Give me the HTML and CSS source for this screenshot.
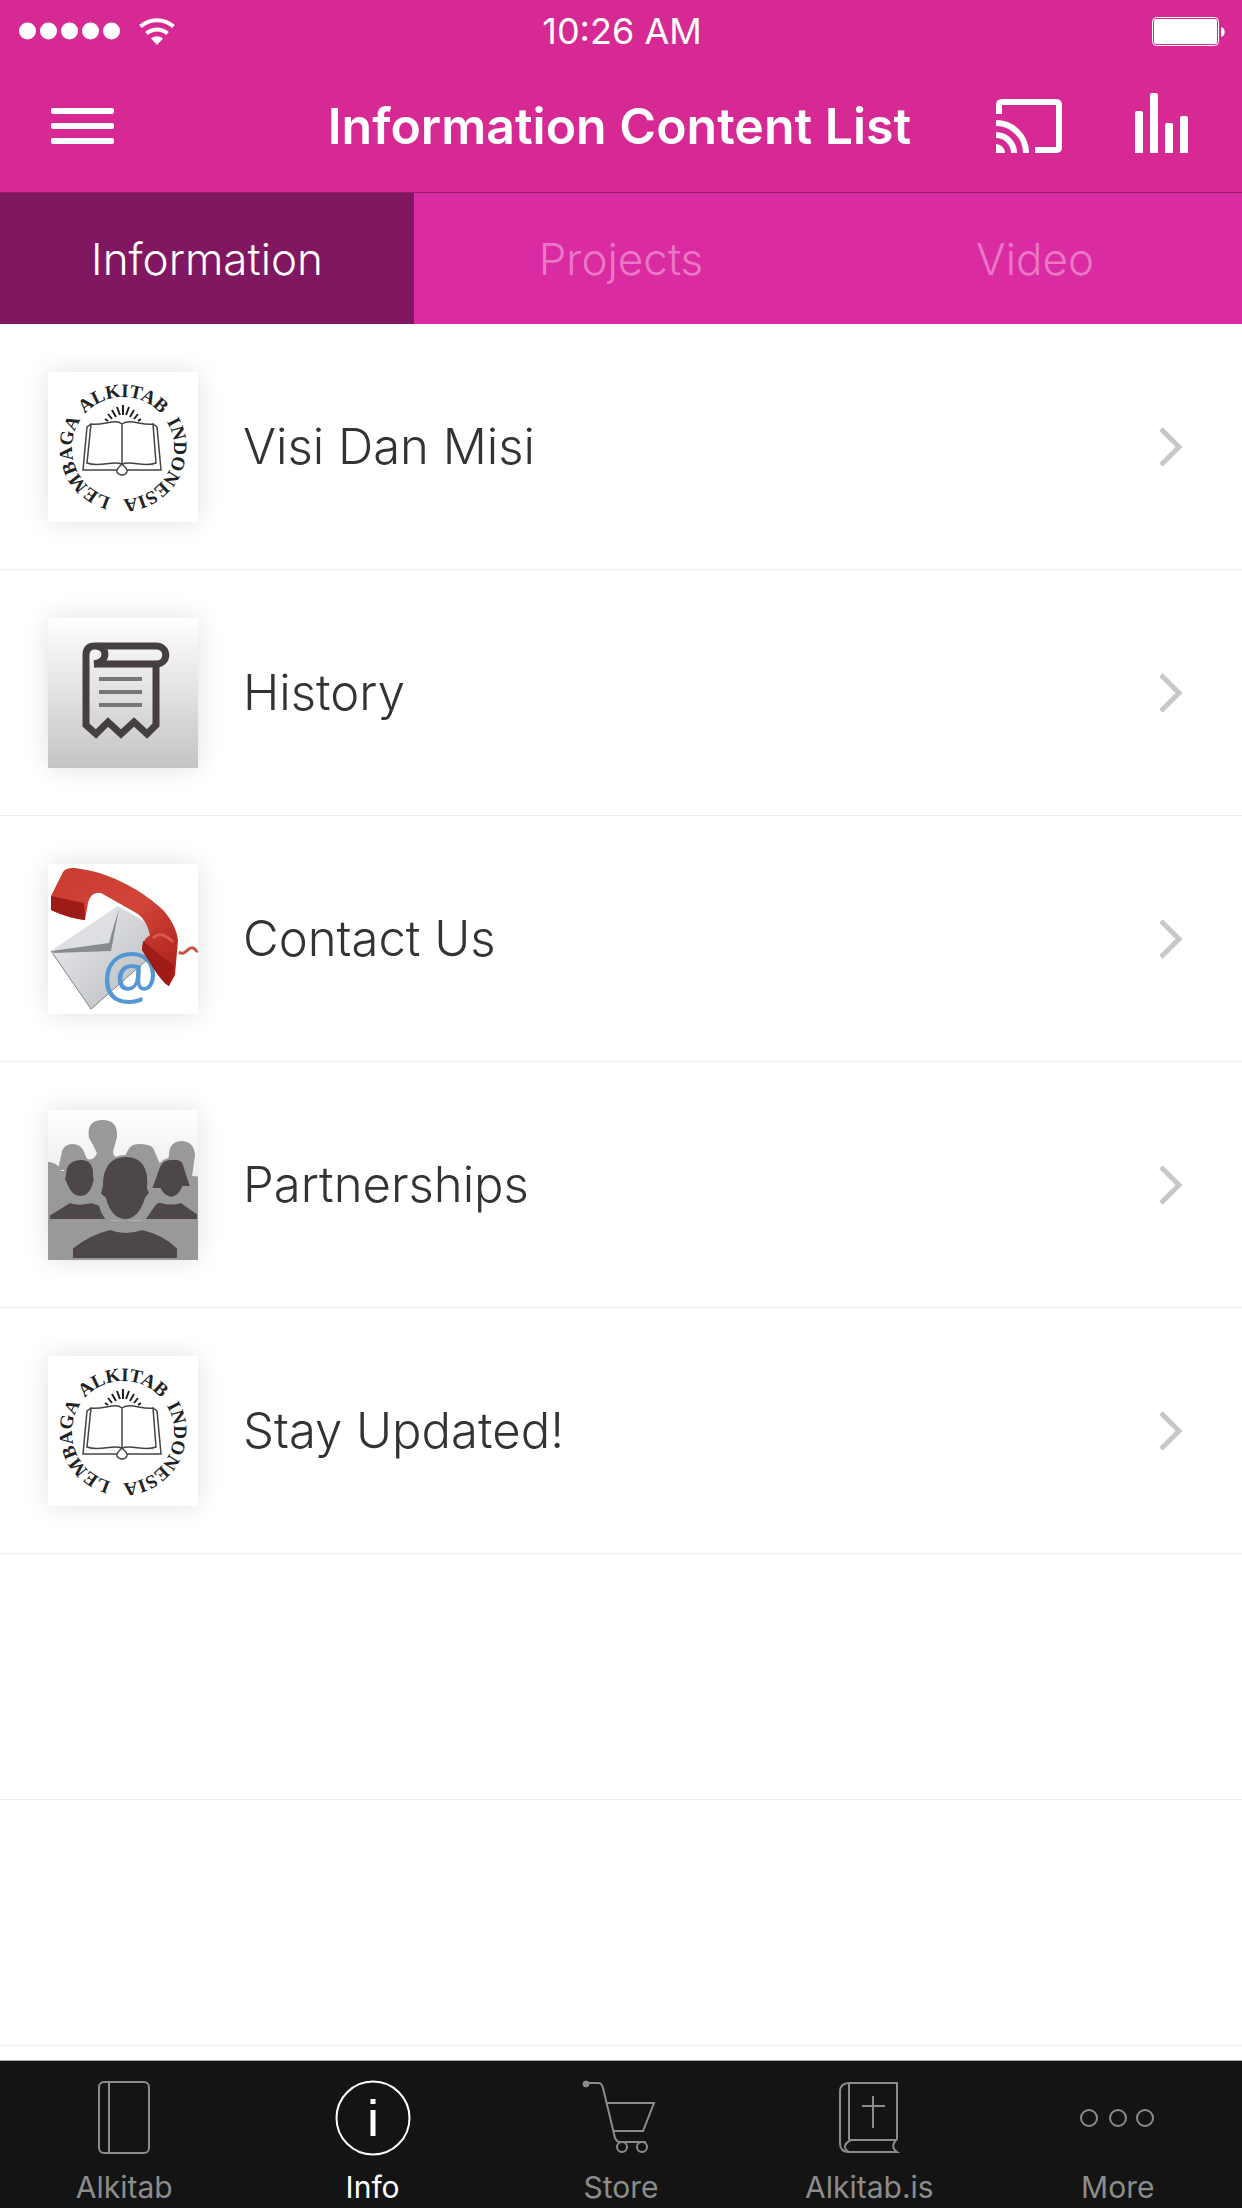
FILE: index.html
```html
<!DOCTYPE html>
<html lang="id">
<head>
<meta charset="utf-8">
<meta name="viewport" content="width=device-width, initial-scale=1">
<title>Information Content List</title>
<link rel="stylesheet" href="styles.css">
</head>
<body>
<svg class="defs" aria-hidden="true">
  <defs>
    <symbol id="chevron" viewBox="0 0 26 40">
      <path d="M3 2l18 18L3 38" fill="none" stroke="#c7c7cc" stroke-width="5"/>
    </symbol>
    <symbol id="logo" viewBox="0 0 150 150">
      <rect width="150" height="150" fill="#fff"/>
      <path id="ring" d="M75 127a51 51 0 0 1 0-102a51 51 0 0 1 0 102" fill="none"/>
      <g class="logo-text" text-anchor="middle">
        <text><textPath href="#ring" startOffset="61">LEMBAGA</textPath></text>
        <text><textPath href="#ring" startOffset="160">ALKITAB</textPath></text>
        <text><textPath href="#ring" startOffset="266">INDONESIA</textPath></text>
      </g>
      <path d="M57 47l3 2M60 42l4 5M64 38l4 7M69 35l3 8M75 33v10M81 35l-3 8M86 38l-4 7M90 42l-4 5M93 47l-3 2" stroke="#222" stroke-width="2"/>
      <g fill="none" stroke="#444" stroke-width="1.5">
        <path d="M74 52C67 46 55 54 43 52L39 91C52 96 64 88 74 92C84 88 96 96 108 91L105 52C94 54 82 46 74 52zV92"/>
        <path d="M43 52l-4 3-4 43h34M105 52l4 3 4 43H79"/>
        <path d="M74 92c-3 3-6 5-5 8 2 4 8 4 10 0 1-3-2-5-5-8z"/>
      </g>
    </symbol>
  </defs>
</svg>
<div class="app">
  <header class="header">
    <div class="status">
      <div class="signal">
        <svg width="102" height="18" viewBox="0 0 102 18" fill="#fff" role="img" aria-label="Signal"><circle cx="8.500" cy="9" r="8.500"/><circle cx="29.500" cy="9" r="8.500"/><circle cx="50.500" cy="9" r="8.500"/><circle cx="71.500" cy="9" r="8.500"/><circle cx="92.500" cy="9" r="8.500"/></svg>
        <svg width="36" height="27" viewBox="0 0 36 27" role="img" aria-label="Wi-Fi"><g fill="none" stroke="#fff" stroke-width="4"><path d="M1.500 8.500C11 0 25 0 34.500 8.500"/><path d="M7.500 15.500c6-5.500 15-5.500 21 0"/></g><path d="M12 20.500c4-3 8-3 12 0l-6 6.500z" fill="#fff"/></svg>
      </div>
      <time class="clock">10:26 AM</time>
      <svg class="battery" width="73" height="29" viewBox="0 0 73 29" role="img" aria-label="Battery"><rect x=".5" y=".5" width="66" height="28" rx="4" fill="none" stroke="#fff"/><rect x="2" y="2" width="63" height="25" rx="2" fill="#fff"/><path d="M69 10c5 1 5 9 0 10z" fill="#fff"/></svg>
    </div>
    <div class="navbar">
      <button class="icon-button" type="button" aria-label="Menu">
        <svg width="63" height="36" viewBox="0 0 63 36" fill="#fff"><rect width="63" height="6" rx="2"/><rect y="15" width="63" height="6" rx="2"/><rect y="30" width="63" height="6" rx="2"/></svg>
      </button>
      <h1 class="title">Information Content List</h1>
      <div class="actions">
        <button class="icon-button" type="button" aria-label="Cast">
          <svg width="66" height="54" viewBox="0 0 66 54"><g fill="none" stroke="#fff" stroke-width="6"><path d="M3 15V6q0-3 3-3h54q3 0 3 3v42q0 3-3 3H39"/><path d="M0 24a30 30 0 0 1 30 30M0 36a18 18 0 0 1 18 18"/></g><path d="M0 45a9 9 0 0 1 9 9H0z" fill="#fff"/></svg>
        </button>
        <button class="icon-button" type="button" aria-label="Now playing">
          <svg width="53" height="60" viewBox="0 0 53 60" fill="#fff"><path d="M0 60V20q0-2 2-2h4q2 0 2 2v40zM15 60V2q0-2 2-2h4q2 0 2 2v58zM30 60V32q0-2 2-2h4q2 0 2 2v28zM45 60V25q0-2 2-2h4q2 0 2 2v35z"/></svg>
        </button>
      </div>
    </div>
  </header>
  <nav class="tabs" aria-label="Sections">
    <button class="tab tab-active" type="button">Information</button>
    <button class="tab" type="button">Projects</button>
    <button class="tab" type="button">Video</button>
  </nav>
  <main class="content">
    <ul class="list">
      <li class="row"><a class="row-link" href="#visi">
        <svg class="thumb" viewBox="0 0 150 150"><use href="#logo"/></svg>
        <span class="row-label">Visi Dan Misi</span>
        <svg class="chevron"><use href="#chevron"/></svg></a></li>
      <li class="row"><a class="row-link" href="#history">
        <svg class="thumb" viewBox="0 0 150 150">
          <defs><linearGradient id="paper" x2="0" y2="1"><stop stop-color="#fff"/><stop offset="1" stop-color="#c4c4c4"/></linearGradient></defs>
          <rect width="150" height="150" fill="url(#paper)"/>
          <g fill="none" stroke="#45403f" stroke-width="7">
            <path d="M108 48v59l-9 9-13-12-13 12-13-12-12 12-10-9V37q0-9 9-9h61c13 0 13 18 0 18H46"/>
            <path d="M49 28c11 2 11 16-3 18"/>
          </g>
          <path d="M51 61h43M51 74h43M51 87h43" stroke="#777" stroke-width="4"/>
        </svg>
        <span class="row-label">History</span>
        <svg class="chevron"><use href="#chevron"/></svg></a></li>
      <li class="row"><a class="row-link" href="#contact">
        <svg class="thumb" viewBox="0 0 150 150">
          <defs>
            <linearGradient id="red" x2="1" y2="1"><stop stop-color="#c93a2f"/><stop offset=".5" stop-color="#d2453a"/><stop offset="1" stop-color="#a81d17"/></linearGradient>
            <linearGradient id="envelope" x2="1" y2="1"><stop stop-color="#f0f1f3"/><stop offset="1" stop-color="#b4b7bb"/></linearGradient>
          </defs>
          <rect width="150" height="150" fill="#fff"/>
          <path d="M3 87L70 42l36 21-6 32-57 50z" fill="url(#envelope)"/>
          <path d="M3 87l58-9L71 45l-8 42-57 2z" fill="#888b90"/>
          <path d="M3 87L70 42 61 79z" fill="#dddfe2"/>
          <path d="M3 87l40 58 57-50" fill="none" stroke="#7e8286"/>
          <text class="at-sign" x="82" y="134" text-anchor="middle">@</text>
          <path d="M131 88c6 5 9-6 14-4 3 1 3 4 5 3" fill="none" stroke="#c95148" stroke-width="3"/>
          <path d="M3 32L15 8q4-6 18-3c31 4 65 24 83 42q12 14 14 29l-3 35-6 11q-6-3-17-20L94 86q0-10 8-15-3-14-12-21L53 29q-10-2-13 10l-3 17Q20 54 3 46z" fill="url(#red)"/>
          <path d="M3 32l33 7 1 17Q20 54 3 46zM95 77l31 25-5 20q-6-3-17-20L94 86z" fill="#9f1b17"/>
          <path d="M105 74q8-8 20 4" fill="none" stroke="#d9574b" stroke-width="3"/>
        </svg>
        <span class="row-label">Contact Us</span>
        <svg class="chevron"><use href="#chevron"/></svg></a></li>
      <li class="row"><a class="row-link" href="#partnerships">
        <svg class="thumb" viewBox="0 0 150 150">
          <defs><linearGradient id="sky" x2="0" y2="1"><stop stop-color="#fff"/><stop offset=".6" stop-color="#e6e6e6"/></linearGradient></defs>
          <rect width="150" height="150" fill="url(#sky)"/>
          <path d="M0 52q6 0 11 5l2 4h3v9H16v-10H10l4-19q3-7 10-7 9 0 12 8l3 7q7 2 10-6l-4-8-4-7q-3-18 14-18 15 0 14 17l-4 15q0 6 9 6h2l4-8q3-6 10-6 12 0 15 4l8 18 6-1 2-10q0-13 12-14 13 0 14 14l-2 15-1 6 10 1 2-5v91H0z" fill="#999"/>
          <path d="M0 110.500h150" stroke="#b4b4b4"/>
          <g fill="#4d4747" stroke="#999" stroke-width="2">
            <path d="M17 65c0-11 7-16 16-16s14 6 13 18l1 2-2 7c-3 8-8 11-13 11s-10-4-13-11l-3-7z"/>
            <path d="M103 79l8-22q3-8 12-8h7l5 3 8 25h-8q-3 9-12 11-9-3-11-9z"/>
            <path d="M1 110v-5l21-13c7 3 14 2 22 0l8 3q2 10 8 15zM96 110l9-13q4-6 8-5 10 3 20 0l17 12v6zM24 149v-11q17-14 38-19 16 6 32 0 22 5 36 19v11z"/>
            <path d="M54 75c0-18 8-29 24-29s24 11 22 32l2 5-4 5c-5 16-12 22-21 22s-17-8-20-22l-5-4z"/>
          </g>
        </svg>
        <span class="row-label">Partnerships</span>
        <svg class="chevron"><use href="#chevron"/></svg></a></li>
      <li class="row"><a class="row-link" href="#updates">
        <svg class="thumb" viewBox="0 0 150 150"><use href="#logo"/></svg>
        <span class="row-label">Stay Updated!</span>
        <svg class="chevron"><use href="#chevron"/></svg></a></li>
      <li class="row"></li>
      <li class="row"></li>
    </ul>
  </main>
  <nav class="tabbar" aria-label="Main">
    <a class="tabbar-item" href="#alkitab">
      <svg class="tabbar-icon" viewBox="0 0 78 78"><rect x="14" y="3" width="50" height="71" rx="5"/><path d="M24 3v71"/></svg>
      Alkitab</a>
    <a class="tabbar-item tabbar-active" href="#info">
      <svg class="tabbar-icon" viewBox="0 0 78 78"><circle cx="39" cy="39" r="36.500"/><path d="M39 20v5M39 31v26" stroke-width="5"/></svg>
      Info</a>
    <a class="tabbar-item" href="#store">
      <svg class="tabbar-icon" viewBox="0 0 78 78"><circle cx="4" cy="5" r="3" fill="#8c8c8c" stroke-width="1"/><path d="M5 4h11q4 0 5 5l12 50q2 4 5 4h26M25 24h47L61 52H32"/><circle cx="40" cy="68" r="5"/><circle cx="60" cy="68" r="5"/></svg>
      Store</a>
    <a class="tabbar-item" href="#alkitab-is">
      <svg class="tabbar-icon" viewBox="0 0 78 78"><path d="M67 61V4H19q-9 0-9 9v51q0 9 9 9h48q-7-5-1-12H21q-11 6-2 12M19 4v57M43 17v32M32 27h23"/></svg>
      Alkitab.is</a>
    <a class="tabbar-item" href="#more">
      <svg class="tabbar-icon" viewBox="0 0 78 78"><circle cx="10" cy="39" r="8"/><circle cx="39" cy="39" r="8"/><circle cx="66" cy="39" r="8"/></svg>
      More</a>
  </nav>
</div>
</body>
</html>
```
FILE: styles.css
```css
* {
  box-sizing: border-box;
}

body {
  margin: 0;
  font-family: Inter, "Liberation Sans", sans-serif;
  background: #fff;
}

button {
  padding: 0;
  border: 0;
  background: none;
  font: inherit;
  cursor: pointer;
}

a {
  color: inherit;
  text-decoration: none;
}

svg {
  display: block;
  flex: none;
}

.defs {
  position: absolute;
  width: 0;
  height: 0;
}

.app {
  display: flex;
  flex-direction: column;
  min-height: 100vh;
}

.header {
  background: #d62994;
  color: #fff;
  border-bottom: 1px solid #961d6c;
}

.status {
  display: grid;
  grid-template-columns: 1fr auto 1fr;
  align-items: center;
  height: 60px;
  padding: 2px 17px 0 19px;
}

.signal {
  display: flex;
  align-items: center;
  gap: 18px;
}

.clock {
  font-size: 36px;
  line-height: 40px;
}

.battery {
  justify-self: end;
}

.navbar {
  display: grid;
  grid-template-columns: 1fr auto 1fr;
  align-items: center;
  height: 132px;
  padding: 0 54px 0 51px;
}

.icon-button {
  justify-self: start;
}

.title {
  margin: 0;
  font-size: 50px;
  font-weight: 600;
  line-height: 60px;
}

.actions {
  display: flex;
  justify-content: flex-end;
  align-items: flex-end;
  gap: 73px;
  padding-bottom: 6px;
}

.tabs {
  display: grid;
  grid-template-columns: repeat(3, 1fr);
  background: #da2ba3;
}

.tab {
  height: 131px;
  font-size: 44px;
  font-weight: 300;
  color: #ea78c6;
}

.tab-active {
  background: #811760;
  color: #fff;
}

.content {
  flex: 1;
}

.list {
  margin: 0;
  padding: 0;
  list-style: none;
}

.row {
  height: 246px;
  border-bottom: 1px solid #ececec;
}

.row-link {
  display: flex;
  align-items: center;
  gap: 45px;
  height: 100%;
  padding: 0 58px 0 48px;
}

.thumb {
  width: 150px;
  height: 150px;
  box-shadow: 0 0 24px rgba(0, 0, 0, 0.12);
}

.row-label {
  flex: 1;
  font-size: 49px;
  font-weight: 300;
  line-height: 60px;
  color: #333;
}

.chevron {
  width: 26px;
  height: 40px;
}

.logo-text {
  font: bold 19px "Liberation Serif", serif;
  fill: #222;
}

.at-sign {
  font: 64px "Open Sans", sans-serif;
  fill: #5597d3;
}

.tabbar {
  position: sticky;
  bottom: 0;
  display: grid;
  grid-template-columns: repeat(5, 1fr);
  padding: 18px 0 3px;
  border-top: 1px solid #aaa;
  background: #141414;
  color: #8c8c8c;
}

.tabbar-item {
  display: flex;
  flex-direction: column;
  align-items: center;
  gap: 12px;
  font-size: 30px;
  line-height: 36px;
}

.tabbar-active {
  color: #fff;
}

.tabbar-icon {
  width: 78px;
  height: 78px;
  fill: none;
  stroke: currentColor;
  stroke-width: 2;
}
```
